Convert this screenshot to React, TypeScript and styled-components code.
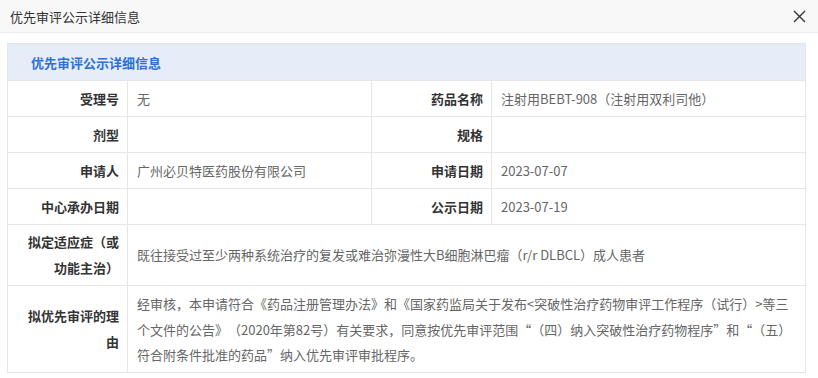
import React from 'react';
import styled, { createGlobalStyle } from 'styled-components';

const GlobalStyle = createGlobalStyle`
  html, body {
    margin: 0;
    padding: 0;
    background: #fff;
  }
  body {
    font-family: "Noto Sans CJK SC", "Noto Sans", "Liberation Sans", sans-serif;
    font-size: 13px;
    color: #333;
    text-spacing-trim: space-all;
  }
`;

const Dialog = styled.div`
  width: 818px;
  height: 378px;
  display: flex;
  flex-direction: column;
  overflow: hidden;
`;

const TitleBar = styled.div`
  flex: 0 0 33px;
  height: 33px;
  display: flex;
  align-items: center;
  justify-content: space-between;
  padding: 0 12px 0 10px;
  background: #f8f8f8;
  border-bottom: 1px solid #ebebeb;
  box-sizing: border-box;
`;

const Title = styled.span`
  font-size: 13px;
  color: #333;
`;

const CloseButton = styled.button`
  border: 0;
  background: transparent;
  padding: 0;
  width: 14px;
  height: 14px;
  display: flex;
  align-items: center;
  justify-content: center;
  cursor: pointer;
`;

const Body = styled.div`
  padding: 10px 12px 0 7px;
`;

const Table = styled.table`
  width: 799px;
  border-collapse: collapse;
  table-layout: fixed;
  border: 1px solid #e6e6e6;
`;

const Caption = styled.th`
  height: 36px;
  background: #e6edf8;
  color: #2d6fd6;
  font-weight: 700;
  text-align: left;
  padding: 0 0 0 23px;
  border-bottom: 1px solid #e2e6ec;
`;

const Label = styled.th<{ $h?: number }>`
  height: ${(p) => p.$h ?? 35}px;
  padding: 0 8px 0 12px;
  text-align: right;
  font-weight: 700;
  color: #333;
  line-height: 26px;
  border: 1px solid #e6e6e6;
  vertical-align: middle;
  word-break: break-all;
`;

const Value = styled.td<{ $tall?: boolean }>`
  height: 35px;
  padding: ${(p) => (p.$tall ? '5px 10px 4px 9px' : '0 10px 0 9px')};
  color: #666;
  line-height: ${(p) => (p.$tall ? '25.5px' : '20px')};
  border: 1px solid #e6e6e6;
  vertical-align: middle;
  word-break: break-all;
`;

const rows: [string, string, string, string][] = [
  ['受理号', '无', '药品名称', '注射用BEBT-908（注射用双利司他）'],
  ['剂型', '', '规格', ''],
  ['申请人', '广州必贝特医药股份有限公司', '申请日期', '2023-07-07'],
  ['中心承办日期', '', '公示日期', '2023-07-19'],
];

export default function App() {
  return (
    <>
      <GlobalStyle />
      <Dialog lang="zh-CN">
        <TitleBar>
          <Title>优先审评公示详细信息</Title>
          <CloseButton aria-label="关闭">
            <svg width="13" height="13" viewBox="0 0 13 13">
              <path d="M1 1L12 12M12 1L1 12" stroke="#333" strokeWidth="1.4" />
            </svg>
          </CloseButton>
        </TitleBar>
        <Body>
          <Table>
            <colgroup>
              <col style={{ width: 120 }} />
              <col style={{ width: 244 }} />
              <col style={{ width: 120 }} />
              <col />
            </colgroup>
            <thead>
              <tr>
                <Caption colSpan={4}>优先审评公示详细信息</Caption>
              </tr>
            </thead>
            <tbody>
              {rows.map((r) => (
                <tr key={r[0]}>
                  <Label>{r[0]}</Label>
                  <Value>{r[1]}</Value>
                  <Label>{r[2]}</Label>
                  <Value>{r[3]}</Value>
                </tr>
              ))}
              <tr>
                <Label $h={60}>拟定适应症（或功能主治）</Label>
                <Value colSpan={3}>
                  既往接受过至少两种系统治疗的复发或难治弥漫性大B细胞淋巴瘤（r/r DLBCL）成人患者
                </Value>
              </tr>
              <tr>
                <Label>拟优先审评的理由</Label>
                <Value colSpan={3} $tall>
                  经审核，本申请符合《药品注册管理办法》和《国家药监局关于发布&lt;突破性治疗药物审评工作程序（试行）&gt;等三个文件的公告》（2020年第82号）有关要求，同意按优先审评范围“（四）纳入突破性治疗药物程序”和“（五）符合附条件批准的药品”纳入优先审评审批程序。
                </Value>
              </tr>
            </tbody>
          </Table>
        </Body>
      </Dialog>
    </>
  );
}
